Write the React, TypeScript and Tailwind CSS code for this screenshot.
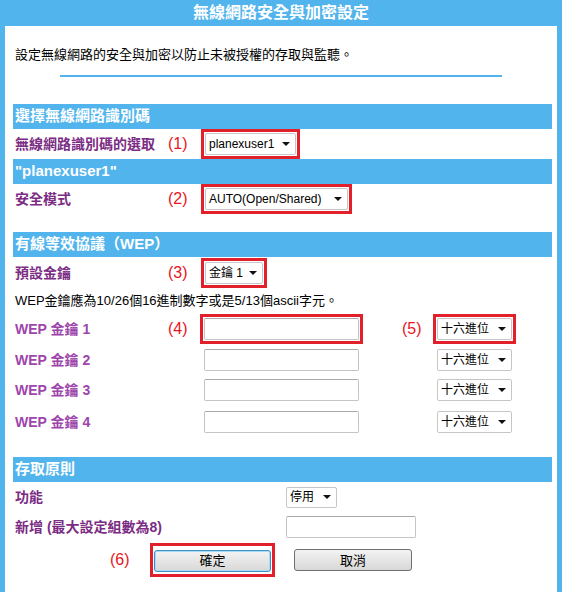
import React from "react";

const BLUE = "bg-[#52b4ec]";

function Arrow() {
  return (
    <svg width="8" height="4" viewBox="0 0 8 4" className="shrink-0">
      <polygon points="0,0 8,0 4,4" fill="#111" />
    </svg>
  );
}

function Select({ text, w, h = 22 }: { text: string; w: number; h?: number }) {
  return (
    <div
      className="flex items-center justify-between bg-white border border-[#c6c6c6] rounded-[2px] pl-[3px] pr-[5px] text-[12px] text-black leading-none"
      style={{ width: w, height: h }}
    >
      <span>{text}</span>
      <Arrow />
    </div>
  );
}

function Input({ w, h = 22 }: { w: number; h?: number }) {
  return (
    <div
      className="bg-white border border-[#c4c4c4] border-t-[#a9a9a9] rounded-[2px]"
      style={{ width: w, height: h }}
    />
  );
}

function Red({ on = true, children }: { on?: boolean; children: React.ReactNode }) {
  return (
    <div className={`border-[3px] p-[1px] ${on ? "border-[#e2202c]" : "border-transparent"}`}>
      {children}
    </div>
  );
}

function Note({ n, w = 33 }: { n: number; w?: number }) {
  return (
    <div className="text-[16px] text-[#e8161c] leading-none shrink-0" style={{ width: w }}>
      ({n})
    </div>
  );
}

function Bar({ children }: { children: React.ReactNode }) {
  return (
    <div className={`${BLUE} h-[25px] flex items-center pl-[2px] text-white font-bold text-[15px]`}>
      {children}
    </div>
  );
}

function Label({ children, light = false, w = 155 }: { children: React.ReactNode; light?: boolean; w?: number }) {
  return (
    <div
      className={`shrink-0 pl-[2px] font-bold text-[14px] leading-none ${light ? "text-[#9d45ab]" : "text-[#7b2d84]"}`}
      style={{ width: w }}
    >
      {children}
    </div>
  );
}

function WepRow({ n, hl, h }: { n: number; hl?: boolean; h: number }) {
  return (
    <div className="flex items-center" style={{ height: h }}>
      <Label light>WEP 金鑰 {n}</Label>
      {hl ? <Note n={4} w={32} /> : <div className="w-[32px] shrink-0" />}
      <Red on={!!hl}>
        <Input w={155} />
      </Red>
      <div className="w-[39px] shrink-0" />
      {hl ? <Note n={5} w={31} /> : <div className="w-[31px] shrink-0" />}
      <Red on={!!hl}>
        <Select text="十六進位" w={75} />
      </Red>
    </div>
  );
}

export default function App() {
  return (
    <div className="w-[565px] h-[592px] bg-white overflow-hidden font-['Liberation_Sans','Noto_Sans_CJK_TC',sans-serif]">
      <div className="w-[562px] h-full border-x-[5px] border-[#52b4ec] flex flex-col">
        <div className={`${BLUE} h-[26px] shrink-0 flex items-center justify-center text-white font-bold text-[16px]`}>
          無線網路安全與加密設定
        </div>
        <div className="pl-[8px] pr-[5px] flex flex-col">
          <div className="h-[78px] flex flex-col">
            <div className="pt-[21px] pl-[2px] text-[13px] leading-[16px] text-black">
              設定無線網路的安全與加密以防止未被授權的存取與監聽。
            </div>
            <div className={`${BLUE} mt-[12px] ml-[47px] w-[442px] h-[2px]`} />
          </div>

          <Bar>選擇無線網路識別碼</Bar>
          <div className="h-[30px] flex items-center">
            <Label>無線網路識別碼的選取</Label>
            <Note n={1} />
            <Red>
              <Select text="planexuser1" w={91} />
            </Red>
          </div>

          <Bar>"planexuser1"</Bar>
          <div className="h-[30px] flex items-center">
            <Label>安全模式</Label>
            <Note n={2} />
            <Red>
              <Select text="AUTO(Open/Shared)" w={143} />
            </Red>
          </div>
          <div className="h-[18px]" />

          <Bar>有線等效協議（WEP）</Bar>
          <div className="h-[32px] flex items-center">
            <Label>預設金鑰</Label>
            <Note n={3} />
            <Red>
              <Select text="金鑰 1" w={58} />
            </Red>
          </div>
          <div className="h-[23px] flex items-center pl-[2px] text-[13px] text-black leading-none">
            WEP金鑰應為10/26個16進制數字或是5/13個ascii字元。
          </div>
          <WepRow n={1} hl h={34} />
          <WepRow n={2} h={28} />
          <WepRow n={3} h={32} />
          <WepRow n={4} h={31} />
          <div className="h-[20px]" />

          <Bar>存取原則</Bar>
          <div className="h-[30px] flex items-center">
            <Label w={273}>功能</Label>
            <Select text="停用" w={51} h={21} />
          </div>
          <div className="h-[30px] flex items-center">
            <Label w={273}>新增 (最大設定組數為8)</Label>
            <Input w={130} />
          </div>
          <div className="h-[36px] flex items-center">
            <div className="w-[97px] shrink-0" />
            <Note n={6} w={40} />
            <div className="border-[3px] border-[#e2202c] px-[1px] py-[2px]">
              <button className="w-[117px] h-[22px] rounded-[3px] border border-[#3d8fc4] shadow-[inset_0_0_0_1px_#a6dcf5] bg-gradient-to-b from-[#f3f3f3] to-[#d8d8d8] text-[13px] text-black leading-none">
                確定
              </button>
            </div>
            <div className="w-[19px] shrink-0" />
            <button className="w-[118px] h-[22px] rounded-[3px] border border-[#707070] bg-gradient-to-b from-[#f3f3f3] to-[#d8d8d8] text-[13px] text-black leading-none">
              取消
            </button>
          </div>
        </div>
      </div>
    </div>
  );
}
